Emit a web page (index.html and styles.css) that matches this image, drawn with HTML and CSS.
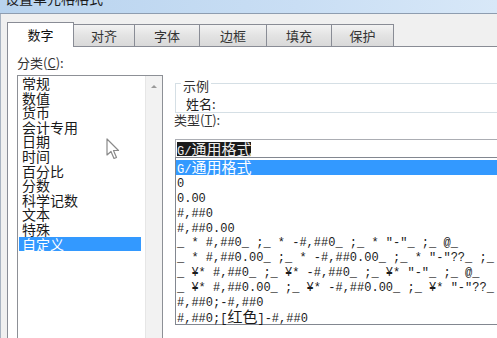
FILE: index.html
```html
<!DOCTYPE html>
<html lang="zh-CN">
<head>
    <meta charset="UTF-8">
    <title>设置单元格格式</title>
    <link rel="stylesheet" href="styles.css">
</head>
<body>
    <div class="titlebar"><div class="title">设置单元格格式</div></div>

    <div class="window">
        <div class="frame"></div>
        <div class="dialog">
            <div class="tabs">
                <div class="tab active">数字</div>
                <div class="tab w61">对齐</div>
                <div class="tab w65">字体</div>
                <div class="tab w67">边框</div>
                <div class="tab w65">填充</div>
                <div class="tab w62">保护</div>
            </div>

            <div class="panel">
                <div class="col-left">
                    <div class="label">分类(<u>C</u>):</div>
                    <div class="listbox">
                        <ul class="category">
                            <li>常规</li>
                            <li>数值</li>
                            <li>货币</li>
                            <li>会计专用</li>
                            <li>日期</li>
                            <li>时间</li>
                            <li>百分比</li>
                            <li>分数</li>
                            <li>科学记数</li>
                            <li>文本</li>
                            <li>特殊</li>
                            <li class="selected">自定义</li>
                        </ul>
                        <div class="scrollbar"><div class="arrow-up"></div></div>
                    </div>
                </div>

                <div class="col-right">
                    <fieldset class="sample">
                        <legend>示例</legend>
                        <div class="sample-value">姓名:</div>
                    </fieldset>
                    <div class="label type-label">类型(<u>T</u>):</div>
                    <div class="type-input"><span class="sel">G/<span class="cjk">通用格式</span></span></div>
                    <ul class="type-list">
                        <li class="selected">G/<span class="cjk">通用格式</span></li>
                        <li>0</li>
                        <li>0.00</li>
                        <li>#,##0</li>
                        <li>#,##0.00</li>
                        <li>_ * #,##0_ ;_ * -#,##0_ ;_ * "-"_ ;_ @_ </li>
                        <li>_ * #,##0.00_ ;_ * -#,##0.00_ ;_ * "-"??_ ;_ @_ </li>
                        <li>_ ¥* #,##0_ ;_ ¥* -#,##0_ ;_ ¥* "-"_ ;_ @_ </li>
                        <li>_ ¥* #,##0.00_ ;_ ¥* -#,##0.00_ ;_ ¥* "-"??_ ;_ @_ </li>
                        <li>#,##0;-#,##0</li>
                        <li class="mixed">#,##0;[<span class="cjk">红色</span>]-#,##0</li>
                    </ul>
                </div>
            </div>
        </div>
    </div>

    <!-- mouse pointer over the category list -->
    <svg class="cursor" width="14" height="22" viewBox="0 0 14 22">
        <path d="M1 1 L1 17 L5 13.5 L8 20.5 L10.5 19.5 L7.5 12.5 L12.5 12.5 Z" fill="#fff" stroke="#8a8a8a" stroke-width="1.2" stroke-linejoin="round"/>
    </svg>
</body>
</html>
```

FILE: styles.css
```css
body {
    margin: 0;
    padding: 0;
    width: 497px;
    height: 338px;
    overflow: hidden;
    position: relative;
    background-color: #f0f0f0;
    font-family: "Noto Sans CJK SC", sans-serif;
    color: #222;
}

ul {
    list-style: none;
    margin: 0;
    padding: 0;
}

.titlebar {
    height: 13px;
    overflow: hidden;
    background: linear-gradient(to right, #b8d3ee, #c9def4 60%, #d8e8f8);
    border-bottom: 1px solid #8e9db0;
}

.title {
    margin-top: -9px;
    padding-left: 5px;
    font-size: 14px;
    line-height: 15px;
    color: #1c1c1c;
}

.window {
    display: flex;
    height: 324px;
}

.frame {
    width: 3px;
    background-color: #dde7f2;
    border-right: 1px solid #a8b3c1;
}

.dialog {
    width: 620px;
    padding: 8px 0 0 6px;
}

/* tab strip */
.tabs {
    display: flex;
    align-items: flex-end;
    height: 24px;
}

.tab {
    box-sizing: border-box;
    height: 22px;
    border: 1px solid #898c95;
    border-left: none;
    border-bottom: none;
    background: linear-gradient(#f3f3f3, #e3e3e3 50%, #d9d9d9);
    font-size: 13px;
    line-height: 21px;
    text-align: center;
    color: #333;
}

.tab.active {
    position: relative;
    z-index: 1;
    width: 67px;
    height: 25px;
    margin-bottom: -1px;
    border-left: 1px solid #898c95;
    background: #fff;
    line-height: 23px;
    color: #111;
}

.w61 { width: 61px; }
.w62 { width: 62px; }
.w65 { width: 65px; }
.w67 { width: 67px; }

/* tab page */
.panel {
    display: flex;
    gap: 11px;
    height: 300px;
    background-color: #fff;
    border: 1px solid #898c95;
    padding: 8px 0 0 9px;
}

.label {
    font-size: 13px;
    line-height: 16px;
    margin-bottom: 4px;
    color: #333;
}

.label u {
    text-decoration: underline;
}

.col-left {
    width: 146px;
    flex-shrink: 0;
}

.listbox {
    display: flex;
    height: 280px;
    border: 1px solid #8d9096;
}

.category {
    flex: 1;
    font-size: 14px;
    line-height: 14.6px;
    color: #1a1a1a;
}

.category li {
    margin: 0 4px 0 1px;
    padding-left: 3px;
}

.category li.selected {
    background-color: #3399ff;
    color: #fff;
}

.scrollbar {
    width: 16px;
    background-color: #f2f2f2;
    border-left: 1px solid #e6e6e6;
}

.arrow-up {
    width: 0;
    height: 0;
    margin: 9px auto 0;
    border-left: 3px solid transparent;
    border-right: 3px solid transparent;
    border-bottom: 3px solid #9a9a9a;
}

.col-right {
    flex: 1;
    margin-top: 18px;
}

.sample {
    margin: 0 0 0 1px;
    padding: 0 0 1px 0;
    border: 1px solid #d5dfe5;
    border-right: none;
}

.sample legend {
    margin-left: 5px;
    padding: 6px 2px 0;
    font-size: 13px;
    line-height: 14px;
    color: #333;
}

.sample-value {
    margin-top: 4px;
    padding-left: 10px;
    font-size: 13px;
    line-height: 14px;
    color: #222;
}

.type-label {
    line-height: 14px;
    margin-bottom: 12px;
}

.type-input {
    margin-left: 1px;
    border: 1px solid #abadb3;
    border-bottom: none;
    padding: 2px 0 0 1px;
    box-sizing: border-box;
    height: 18px;
}

.type-input .sel {
    display: inline-block;
    height: 14px;
    background-color: #1b1b1b;
    color: #eee;
    font-family: "Liberation Mono", monospace;
    font-size: 12px;
    line-height: 14px;
    vertical-align: top;
}

.type-list {
    height: 168px;
    box-sizing: border-box;
    margin-left: 1px;
    border: 1px solid #828790;
    padding-top: 2px;
    font-family: "Liberation Mono", monospace;
    font-size: 12px;
    line-height: 14.9px;
    color: #1a1a1a;
}

.type-list li {
    box-sizing: border-box;
    height: 14.9px;
    padding: 2px 0 0 1px;
    white-space: pre;
}

.type-list li.selected,
.type-list li.mixed {
    padding-top: 0;
}

.type-list li.selected {
    background-color: #3399ff;
    color: #fff;
}

.cjk {
    font-family: "Noto Sans CJK SC", sans-serif;
    font-size: 15px;
    line-height: 14px;
}

.cursor {
    position: absolute;
    left: 106px;
    top: 138px;
}
```
